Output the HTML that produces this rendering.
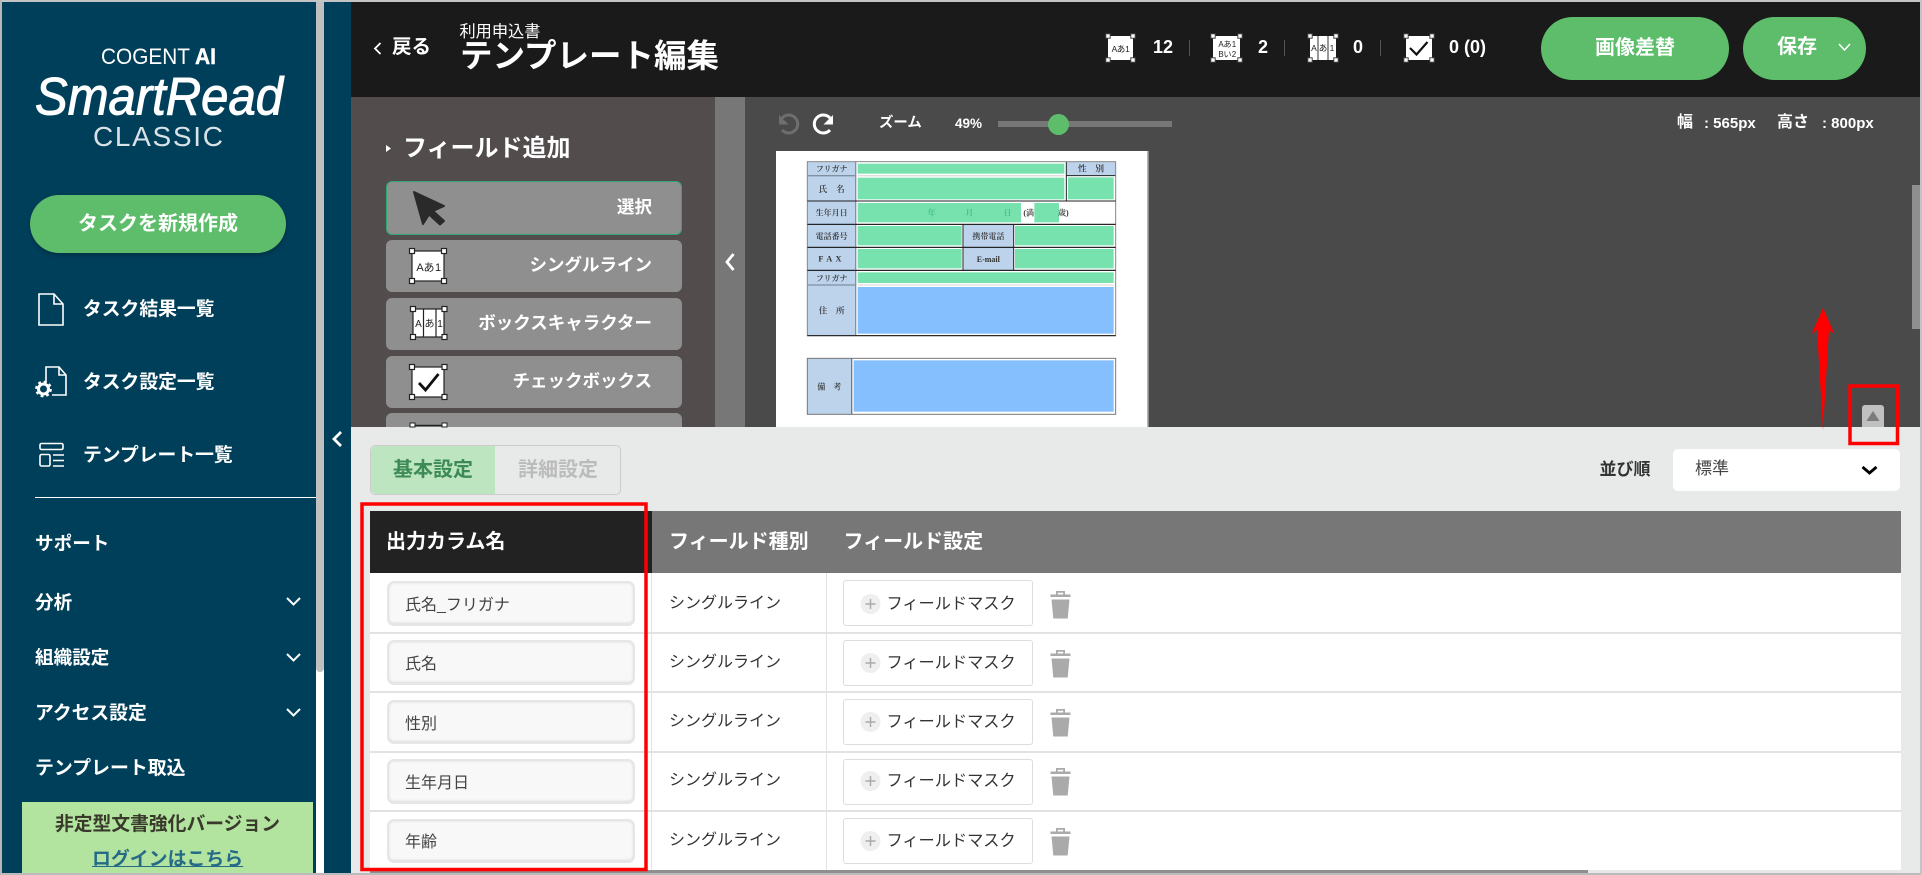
<!DOCTYPE html>
<html lang="ja">
<head>
<meta charset="utf-8">
<title>テンプレート編集</title>
<style>
html,body{margin:0;padding:0}
body{width:1922px;height:875px;position:relative;overflow:hidden;background:#e8eaea;font-family:"Liberation Sans","Noto Sans CJK JP",sans-serif;color:#333}
div,span,a{position:absolute;box-sizing:border-box}
.t{white-space:nowrap;line-height:1}
.b{font-weight:700}
.w{color:#fff}
.fb{left:386px;width:296px;height:52px;background:#8f8f8f;border-radius:6px}
.fl{font-size:17.5px;font-weight:700;color:#fff;white-space:nowrap;line-height:1;right:1270px}
.inp{left:387px;width:248px;background:#f8f8f8;border:2px solid #e6e6e6;border-bottom-width:3px;border-radius:7px;box-shadow:inset 0 0 2px #d8d8d8}
.inpt{left:405px;font-size:16px;color:#444;white-space:nowrap;line-height:1}
.ty{left:669px;font-size:16px;color:#333;white-space:nowrap;line-height:1}
.mask{left:843px;width:190px;height:46px;background:#fff;border:1px solid #ddd;border-radius:3px}
.mt{left:886.5px;font-size:16.2px;color:#333;white-space:nowrap;line-height:1}
svg{position:absolute;left:0;top:0}
</style>
</head>
<body>
<!-- sidebar -->
<div style="left:0;top:0;width:351px;height:875px;background:#003f5a"></div>
<div style="left:316px;top:0;width:8px;height:875px;background:#fff"></div>
<div style="left:316px;top:0;width:8px;height:672px;background:#c0c0c0;border-radius:0 0 4px 4px"></div>
<div style="left:22px;top:802px;width:291px;height:73px;background:#b2e49f"></div>
<div style="left:30px;top:195px;width:256px;height:58px;background:#5dbd6b;border-radius:29px;box-shadow:0 2px 4px rgba(0,0,0,.25)"></div>
<span class="t b w" style="left:78px;top:214px;font-size:20px">タスクを新規作成</span>
<span class="t b w" style="left:83px;top:300px;font-size:18.8px">タスク結果一覧</span>
<span class="t b w" style="left:83px;top:373px;font-size:18.8px">タスク設定一覧</span>
<span class="t b w" style="left:83px;top:446px;font-size:18.8px">テンプレート一覧</span>
<div style="left:35px;top:497px;width:281px;height:1px;background:#fff"></div>
<span class="t b w" style="left:35px;top:535px;font-size:18.6px">サポート</span>
<span class="t b w" style="left:35px;top:594px;font-size:18.6px">分析</span>
<span class="t b w" style="left:35px;top:649px;font-size:18.6px">組織設定</span>
<span class="t b w" style="left:35px;top:704px;font-size:18.8px">アクセス設定</span>
<span class="t b w" style="left:35px;top:760px;font-size:18.9px">テンプレート取込</span>
<span class="t b" style="left:55px;top:815px;font-size:18.8px;color:#3a3a2c">非定型文書強化バージョン</span>
<span class="t b" style="left:92px;top:851px;font-size:18.9px;color:#256b88;text-decoration:underline">ログインはこちら</span>

<!-- header -->
<div style="left:351px;top:0;width:1571px;height:97px;background:#1a1a1a"></div>
<span class="t b w" style="left:392px;top:38px;font-size:19.5px">戻る</span>
<span class="t w" style="left:459.500px;top:24px;font-size:16.2px">利用申込書</span>
<span class="t b w" style="left:460px;top:39.500px;font-size:32.500px">テンプレート編集</span>
<span class="t b w" style="left:1153px;top:38px;font-size:18px">12</span>
<span class="t b w" style="left:1258px;top:38px;font-size:18px">2</span>
<span class="t b w" style="left:1353px;top:38px;font-size:18px">0</span>
<span class="t b w" style="left:1449px;top:38px;font-size:18px">0 (0)</span>
<div style="left:1189px;top:40px;width:1px;height:16px;background:#555"></div>
<div style="left:1284px;top:40px;width:1px;height:16px;background:#555"></div>
<div style="left:1380px;top:40px;width:1px;height:16px;background:#555"></div>
<div style="left:1541px;top:17px;width:188px;height:63px;background:#5dbd6b;border-radius:32px"></div>
<span class="t b w" style="left:1595px;top:38px;font-size:20px">画像差替</span>
<div style="left:1743px;top:17px;width:123px;height:63px;background:#5dbd6b;border-radius:32px"></div>
<span class="t b w" style="left:1777px;top:37px;font-size:20px">保存</span>

<!-- field panel -->
<div style="left:351px;top:97px;width:364px;height:330px;background:#524c4c"></div>
<div style="left:715px;top:97px;width:30px;height:330px;background:#777"></div>
<div style="left:745px;top:97px;width:1175px;height:330px;background:#4a4a4a"></div>
<span class="t b w" style="left:403px;top:136.500px;font-size:24px">フィールド追加</span>
<div class="fb" style="top:181px;height:54px;border:1.5px solid #2fa876"></div>
<div class="fb" style="top:240px"></div>
<div class="fb" style="top:298px"></div>
<div class="fb" style="top:356px"></div>
<div class="fb" style="top:413px;height:14px;border-radius:6px 6px 0 0"></div>
<span class="fl" style="top:199px">選択</span>
<span class="fl" style="top:257px">シングルライン</span>
<span class="fl" style="top:315px">ボックスキャラクター</span>
<span class="fl" style="top:373px">チェックボックス</span>

<!-- toolbar -->
<span class="t b w" style="left:879px;top:116px;font-size:14.4px">ズーム</span>
<span class="t b w" style="left:955px;top:117px;font-size:13.500px">49%</span>
<div style="left:998px;top:121px;width:174px;height:6px;background:#777"></div>
<div style="left:1048px;top:113.500px;width:21px;height:21px;border-radius:50%;background:#5dbd6b"></div>
<span class="t b w" style="left:1677px;top:115px;font-size:16px">幅</span>
<span class="t b w" style="left:1704px;top:116px;font-size:15px">: 565px</span>
<span class="t b w" style="left:1777px;top:115px;font-size:16px">高さ</span>
<span class="t b w" style="left:1822px;top:116px;font-size:15px">: 800px</span>
<div style="left:1912px;top:185px;width:8px;height:144px;background:#8f8f8f"></div>

<!-- document preview -->
<svg style="left:770px;top:145px;filter:blur(.3px)" width="390" height="282" viewBox="0 0 1170 846">
<rect x="18" y="18" width="1114" height="840" fill="#fff"/>
<rect x="1132" y="18" width="4" height="840" fill="#aaa"/>
<g fill="#bdd3eb"><rect x="112" y="50" width="145" height="522"/><rect x="890" y="50" width="147" height="42"/><rect x="581" y="238" width="149" height="138"/><rect x="112" y="640" width="133" height="168"/></g>
<g fill="#78e2ae"><rect x="263" y="56" width="620" height="30"/><rect x="263" y="98" width="620" height="65"/><rect x="894" y="97" width="137" height="66"/><rect x="263" y="174" width="490" height="58"/><rect x="793" y="174" width="74" height="58"/><rect x="263" y="243" width="312" height="58"/><rect x="735" y="243" width="296" height="58"/><rect x="263" y="312" width="312" height="58"/><rect x="735" y="312" width="296" height="58"/><rect x="263" y="382" width="768" height="32"/></g>
<g fill="#85bffe"><rect x="263" y="426" width="768" height="140"/><rect x="251" y="646" width="780" height="154"/></g>
<g fill="none" stroke-width="3">
<path d="M112 168H1037M112 238H1037M112 307H1037M112 376H1037" stroke="#111"/>
<path d="M889 50V168M890 92H1037M579 238V376M731 238V376" stroke="#222"/>
<path d="M112 92H257M112 420H257M257 50V572" stroke="#8090a0" stroke-width="4"/>
<path d="M112 572H1037" stroke="#333"/>
</g>
<path d="M263 92H883M263 420H1031" stroke="#ddd" stroke-width="4"/>
<rect x="112" y="50" width="925" height="522" fill="none" stroke="#888" stroke-width="3"/>
<path d="M112 168H1037M112 238H1037M112 307H1037M112 376H1037M112 572H1037" stroke="#222" stroke-width="3" fill="none"/>
<rect x="112" y="640" width="925" height="168" fill="none" stroke="#777" stroke-width="3"/>
<path d="M245 640V808" stroke="#777" stroke-width="4"/>
<g font-family="'Liberation Serif','Noto Serif CJK SC',serif" fill="#333" text-anchor="middle" font-size="24" font-weight="600">
<text x="185" y="80">フリガナ</text><text x="185" y="141" font-size="26">氏　名</text><text x="185" y="212">生年月日</text><text x="185" y="282">電話番号</text><text x="185" y="350" font-size="25" letter-spacing="10">FAX</text><text x="185" y="408">フリガナ</text><text x="185" y="506" font-size="26">住　所</text><text x="178" y="733" font-size="24">備　考</text><text x="963" y="80" font-size="26">性　別</text><text x="655" y="282">携帯電話</text><text x="655" y="351">E-mail</text><text x="485" y="212" fill="#3cb987">年</text><text x="598" y="212" fill="#3cb987">月</text><text x="712" y="212" fill="#3cb987">日</text><text x="776" y="212">(満</text><text x="880" y="212">歳)</text>
</g>
</svg>

<!-- bottom panel -->
<div style="left:351px;top:427px;width:1569px;height:448px;background:#e8eaea"></div>
<div style="left:1862px;top:405px;width:22px;height:22px;background:#c0c0c0;border-radius:3px 3px 0 0"></div>

<div style="left:370px;top:445px;width:251px;height:50px;border:1px solid #ccc;border-radius:5px;background:#e8eaea"></div>
<div style="left:371px;top:446px;width:124px;height:48px;background:#bde5bf;border-radius:5px 0 0 5px"></div>
<span class="t b" style="left:393px;top:460px;font-size:20px;color:#3c8a55">基本設定</span>
<span class="t b" style="left:518px;top:460px;font-size:20px;color:#bbb">詳細設定</span>
<span class="t b" style="left:1599.500px;top:461px;font-size:17px;color:#333">並び順</span>
<div style="left:1673px;top:449px;width:227px;height:42px;background:#fff;border-radius:5px"></div>
<span class="t" style="left:1695px;top:460px;font-size:17px;color:#444">標準</span>

<div style="left:370px;top:511px;width:1531px;height:62px;background:#777"></div>
<div style="left:370px;top:511px;width:282px;height:62px;background:#222"></div>
<span class="t b w" style="left:386px;top:531.500px;font-size:20px">出力カラム名</span>
<span class="t b w" style="left:669px;top:531.500px;font-size:20px">フィールド種別</span>
<span class="t b w" style="left:843.500px;top:531.500px;font-size:20px">フィールド設定</span>

<div style="left:370px;top:573px;width:1531px;height:297px;background:#fff"></div>
<div style="left:370px;top:632px;width:1531px;height:2px;background:#e2e2e2"></div>
<div style="left:370px;top:691px;width:1531px;height:2px;background:#e2e2e2"></div>
<div style="left:370px;top:751px;width:1531px;height:2px;background:#e2e2e2"></div>
<div style="left:370px;top:810px;width:1531px;height:2px;background:#e2e2e2"></div>
<div style="left:651px;top:573px;width:1px;height:297px;background:#e2e2e2"></div>
<div style="left:826px;top:573px;width:1px;height:297px;background:#e2e2e2"></div>
<div style="left:370px;top:870px;width:1531px;height:3px;background:#e8e8e8"></div>
<div style="left:370px;top:870px;width:1218px;height:3px;background:#8f8f8f"></div>

<div class="inp" style="top:581px;height:45px"></div><span class="inpt" style="top:598px">氏名_フリガナ</span>
<div class="inp" style="top:640px;height:45px"></div><span class="inpt" style="top:657px">氏名</span>
<div class="inp" style="top:700px;height:44px"></div><span class="inpt" style="top:717px">性別</span>
<div class="inp" style="top:759px;height:45px"></div><span class="inpt" style="top:776px">生年月日</span>
<div class="inp" style="top:819px;height:44px"></div><span class="inpt" style="top:835px">年齢</span>

<span class="ty" style="top:596px">シングルライン</span>
<span class="ty" style="top:655px">シングルライン</span>
<span class="ty" style="top:714px">シングルライン</span>
<span class="ty" style="top:773px">シングルライン</span>
<span class="ty" style="top:833px">シングルライン</span>

<div class="mask" style="top:580px"></div><span class="mt" style="top:596px">フィールドマスク</span>
<div class="mask" style="top:640px"></div><span class="mt" style="top:655px">フィールドマスク</span>
<div class="mask" style="top:699px"></div><span class="mt" style="top:714px">フィールドマスク</span>
<div class="mask" style="top:759px"></div><span class="mt" style="top:773px">フィールドマスク</span>
<div class="mask" style="top:818px"></div><span class="mt" style="top:833px">フィールドマスク</span>

<!-- page borders -->
<div style="left:0;top:0;width:1922px;height:2px;background:#c4c4c4"></div>
<div style="left:0;top:0;width:2px;height:875px;background:#b8b8b8"></div>
<div style="left:0;top:873px;width:1922px;height:2px;background:#bbb"></div>
<div style="left:1920px;top:0;width:2px;height:875px;background:#c4c4c4"></div>

<!-- logo + icon overlay -->
<svg width="1922" height="875" viewBox="0 0 1922 875">
<defs>
<g id="h"><rect x="-2.500" y="-2.500" width="5" height="5" fill="#fff" stroke="#222" stroke-width="1.200"/></g>
<g id="sh"><rect x="-2.200" y="-2.200" width="4.400" height="4.400" fill="#fff" stroke="#444" stroke-width="1"/></g>
<g id="tr"><path d="M-10 -9.500h20v2.500h-20zM-4.500 -9.500v-3.500h9v3.500h-1.800v-1.800h-5.400v1.800z" fill="#aaa"/><path d="M-9 -4.500h18l-1.800 19h-14.400z" fill="#aaa"/></g>
</defs>
<!-- logo -->
<g fill="#fff" font-family="'Liberation Sans',sans-serif">
<text x="101" y="64" font-size="22" textLength="89" lengthAdjust="spacingAndGlyphs">COGENT</text>
<text x="195" y="64" font-size="22" font-weight="700" textLength="21" lengthAdjust="spacingAndGlyphs" stroke="#fff" stroke-width=".4">AI</text>
<text x="35" y="114.500" font-size="53" font-style="italic" textLength="248" lengthAdjust="spacingAndGlyphs" stroke="#fff" stroke-width="1">SmartRead</text>
<text x="93" y="146" font-size="28" textLength="130" lengthAdjust="spacing" fill-opacity=".85">CLASSIC</text>
</g>
<!-- sidebar icons -->
<g fill="none" stroke="#fff" stroke-width="1.600">
<path d="M39 294H54L63 304V325H39ZM54 294V304H63"/>
<path d="M46 383V367H59L66 375V395H52M59 367V375H66"/>
<rect x="40" y="443.500" width="23" height="6" rx="1.500"/><rect x="40" y="454.500" width="10" height="11.500" rx="1.500"/>
<path d="M53 455H64M53 460.500H64M53 466H64"/>
<path d="M287 598l6.500 6.500l6.500 -6.500M287 654l6.500 6.500l6.500 -6.500M287 709l6.500 6.500l6.500 -6.500" stroke-width="2"/>
<path d="M341 432l-7 7l7 7" stroke-width="2.800"/>
<path d="M380.500 43l-5.500 5.500l5.500 5.500" stroke-width="1.800"/>
<path d="M1839 44l5.500 6l5.500 -6" stroke-width="1.500"/>
<path d="M733.500 254l-6.500 8l6.500 8" stroke-width="2.800"/>
</g>
<circle cx="43.500" cy="389" r="5" fill="none" stroke="#fff" stroke-width="3"/>
<circle cx="43.500" cy="389" r="7.200" fill="none" stroke="#fff" stroke-width="2.400" stroke-dasharray="2.800 2.850"/>
<!-- triangle -->
<path d="M386 145l5 3.500l-5 3.500z" fill="#fff"/>
<!-- cursor -->
<path d="M414 192L444 206L433 211L444 221L440 224.500L429 214.500L423 224Z" fill="#2a2a2a" stroke="#2a2a2a" stroke-width="2" stroke-linejoin="round"/>
<!-- field icon single -->
<rect x="412" y="251" width="32" height="30" fill="#fff" stroke="#222" stroke-width="1.200"/>
<text y="271" font-size="11" fill="#222" text-anchor="middle" font-family="'Liberation Sans','Noto Sans CJK JP',sans-serif"><tspan x="420">A</tspan><tspan x="429">あ</tspan><tspan x="438">1</tspan></text>
<use href="#h" x="412" y="251"/><use href="#h" x="444" y="251"/><use href="#h" x="412" y="281"/><use href="#h" x="444" y="281"/>
<!-- field icon box -->
<rect x="413" y="309" width="31" height="28" fill="#fff" stroke="#222" stroke-width="1.200"/>
<path d="M423.500 309V337M436 309V337" stroke="#222" stroke-width="1.200"/>
<text y="327" font-size="10" fill="#222" text-anchor="middle" font-family="'Liberation Sans','Noto Sans CJK JP',sans-serif"><tspan x="418.500">A</tspan><tspan x="429.500">あ</tspan><tspan x="440">1</tspan></text>
<use href="#h" x="413" y="309"/><use href="#h" x="444.500" y="309"/><use href="#h" x="413" y="337"/><use href="#h" x="444.500" y="337"/>
<!-- field icon check -->
<rect x="412" y="367" width="32" height="30" fill="#fff" stroke="#222" stroke-width="1.200"/>
<path d="M419 383l6.500 7l13 -16" fill="none" stroke="#111" stroke-width="2.800"/>
<use href="#h" x="412" y="367"/><use href="#h" x="444.500" y="367"/><use href="#h" x="412" y="397"/><use href="#h" x="444.500" y="397"/>
<!-- field icon 4 -->
<path d="M412 425.500H445" stroke="#222" stroke-width="1.500"/>
<rect x="410" y="423" width="5" height="4" fill="#fff" stroke="#222"/><rect x="442" y="423" width="5" height="4" fill="#fff" stroke="#222"/>
<!-- header icons -->
<g font-family="'Liberation Sans','Noto Sans CJK JP',sans-serif" fill="#222" text-anchor="middle">
<rect x="1108" y="36" width="25" height="24" fill="#fff"/>
<text y="52" font-size="8.500"><tspan x="1114.500">A</tspan><tspan x="1121">あ</tspan><tspan x="1127.500">1</tspan></text>
<use href="#sh" x="1108" y="36"/><use href="#sh" x="1133" y="36"/><use href="#sh" x="1108" y="60"/><use href="#sh" x="1133" y="60"/>
<rect x="1213" y="36" width="27" height="24" fill="#fff"/>
<text y="47" font-size="8"><tspan x="1221">A</tspan><tspan x="1227.500">あ</tspan><tspan x="1234">1</tspan></text><text y="57" font-size="8"><tspan x="1221">B</tspan><tspan x="1227.500">い</tspan><tspan x="1234">2</tspan></text>
<use href="#sh" x="1213" y="36"/><use href="#sh" x="1240" y="36"/><use href="#sh" x="1213" y="60"/><use href="#sh" x="1240" y="60"/>
<rect x="1310" y="36" width="26" height="24" fill="#fff"/>
<path d="M1318 36V60M1328 36V60" stroke="#555" stroke-width="1.200"/>
<text y="51" font-size="8.500"><tspan x="1314">A</tspan><tspan x="1323">あ</tspan><tspan x="1332">1</tspan></text>
<use href="#sh" x="1310" y="36"/><use href="#sh" x="1336" y="36"/><use href="#sh" x="1310" y="60"/><use href="#sh" x="1336" y="60"/>
<rect x="1406" y="36" width="26" height="24" fill="#fff"/>
<path d="M1410 48l6.500 6.500l11 -12.500" fill="none" stroke="#111" stroke-width="2.200"/>
<use href="#sh" x="1406" y="36"/><use href="#sh" x="1432" y="36"/><use href="#sh" x="1406" y="60"/><use href="#sh" x="1432" y="60"/>
</g>
<!-- undo/redo -->
<g fill="none" stroke-width="3">
<path d="M782 118a9 9 0 1 1 0 12" stroke="#6e6e6e"/>
<path d="M830 118a9 9 0 1 0 0 12" stroke="#fff"/>
</g>
<path d="M779 115v9.500h9.500z" fill="#6e6e6e"/>
<path d="M833 115v9.500h-9.500z" fill="#fff"/>
<!-- triangle btn -->
<path d="M1873 411l6.500 10h-13z" fill="#7c7c7c"/>
<!-- select chevron -->
<path d="M1862.500 467l7 6l7 -6" fill="none" stroke="#000" stroke-width="2.800"/>
<!-- plus circles + trash -->
<g fill="#efefef"><circle cx="870.500" cy="604" r="10"/><circle cx="870.500" cy="663" r="10"/><circle cx="870.500" cy="722" r="10"/><circle cx="870.500" cy="781" r="10"/><circle cx="870.500" cy="841" r="10"/></g>
<path d="M865.500 604h10M870.500 599v10M865.500 663h10M870.500 658v10M865.500 722h10M870.500 717v10M865.500 781h10M870.500 776v10M865.500 841h10M870.500 836v10" stroke="#aaa" stroke-width="1.500"/>
<use href="#tr" x="1060.500" y="604"/><use href="#tr" x="1060.500" y="663"/><use href="#tr" x="1060.500" y="722"/><use href="#tr" x="1060.500" y="781"/><use href="#tr" x="1060.500" y="841"/>
<!-- red annotations -->
<path d="M1823 308L1834.500 334L1829 330L1823 430L1817 330L1811.500 334Z" fill="#f00"/>
<rect x="1850" y="386" width="47.500" height="57.500" fill="none" stroke="#f00" stroke-width="3.500"/>
<rect x="362" y="504" width="284" height="365.500" fill="none" stroke="#f00" stroke-width="3.500"/>
</svg>
</body>
</html>
